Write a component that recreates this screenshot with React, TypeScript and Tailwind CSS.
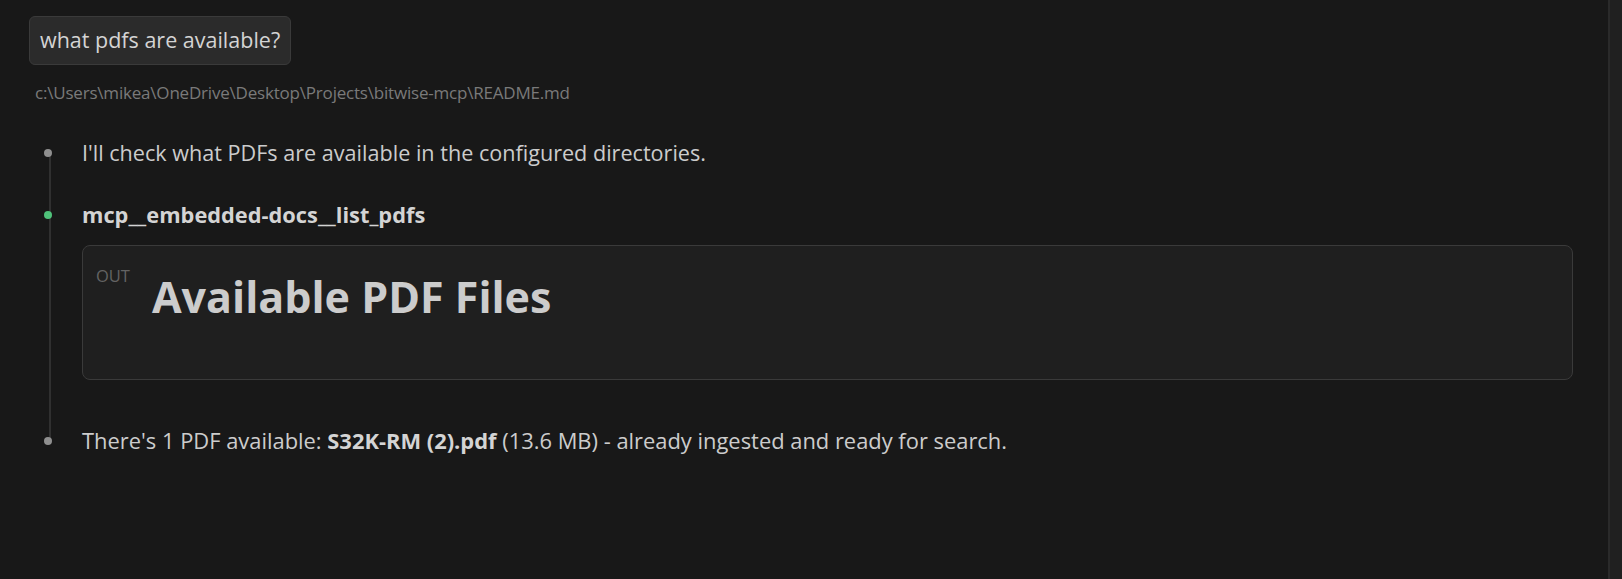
import React from "react";

export default function App() {
  return (
    <div className="w-[1622px] h-[579px] bg-[#181818] flex overflow-hidden text-[#cccccc] font-['Open_Sans',_'Noto_Sans',_sans-serif]">
      <div className="flex-1 flex flex-col items-start pl-[29px] pt-[16px] pr-[35px]">
        <div className="h-[49px] px-[10px] flex items-center rounded-[6px] border border-[#3a3a3a] bg-[#2b2b2b] text-[21.5px] text-[#d4d4d4]">
          what pdfs are available?
        </div>
        <div className="mt-[17px] ml-[6px] text-[17px] leading-[22px] text-[#7a7a7a] tracking-[-0.2px]">
          c:\Users\mikea\OneDrive\Desktop\Projects\bitwise-mcp\README.md
        </div>

        <div className="relative mt-[34px] w-full">
          <div className="absolute left-[20px] top-[18px] h-[282px] w-[2px] bg-[#303030]" />

          <div className="flex items-center h-[30px]">
            <div className="w-[53px] shrink-0 flex">
              <div className="relative z-10 ml-[15px] w-[8px] h-[8px] rounded-full bg-[#8f8f8f]" />
            </div>
            <div className="text-[21.6px] leading-[30px]">
              I'll check what PDFs are available in the configured directories.
            </div>
          </div>

          <div className="flex items-center h-[30px] mt-[32px]">
            <div className="w-[53px] shrink-0 flex">
              <div className="relative z-10 ml-[15px] w-[8px] h-[8px] rounded-full bg-[#4fc27a]" />
            </div>
            <div className="text-[21.8px] leading-[30px] font-bold text-[#d4d4d4]">
              mcp__embedded-docs__list_pdfs
            </div>
          </div>

          <div className="flex mt-[15px]">
            <div className="w-[53px] shrink-0" />
            <div className="flex-1 h-[135px] rounded-[8px] border border-[#3a3a3a] bg-[#1f1f1f] flex items-start">
              <div className="ml-[13px] mt-[19px] text-[16.5px] leading-[22px] text-[#636363]">OUT</div>
              <div className="ml-[22px] mt-[21px] text-[43px] leading-[60px] font-bold text-[#cccccc]">
                Available PDF Files
              </div>
            </div>
          </div>

          <div className="flex items-center h-[30px] mt-[46px]">
            <div className="w-[53px] shrink-0 flex">
              <div className="relative z-10 ml-[15px] w-[8px] h-[8px] rounded-full bg-[#8f8f8f]" />
            </div>
            <div className="text-[21.9px] leading-[30px]">
              There's 1 PDF available: <span className="font-bold text-[#d4d4d4]">S32K-RM (2).pdf</span> (13.6 MB) - already ingested and ready for search.
            </div>
          </div>
        </div>
      </div>
      <div className="w-[14px] h-full border-l-2 border-[#2a2a2a] bg-[#202020]" />
    </div>
  );
}
